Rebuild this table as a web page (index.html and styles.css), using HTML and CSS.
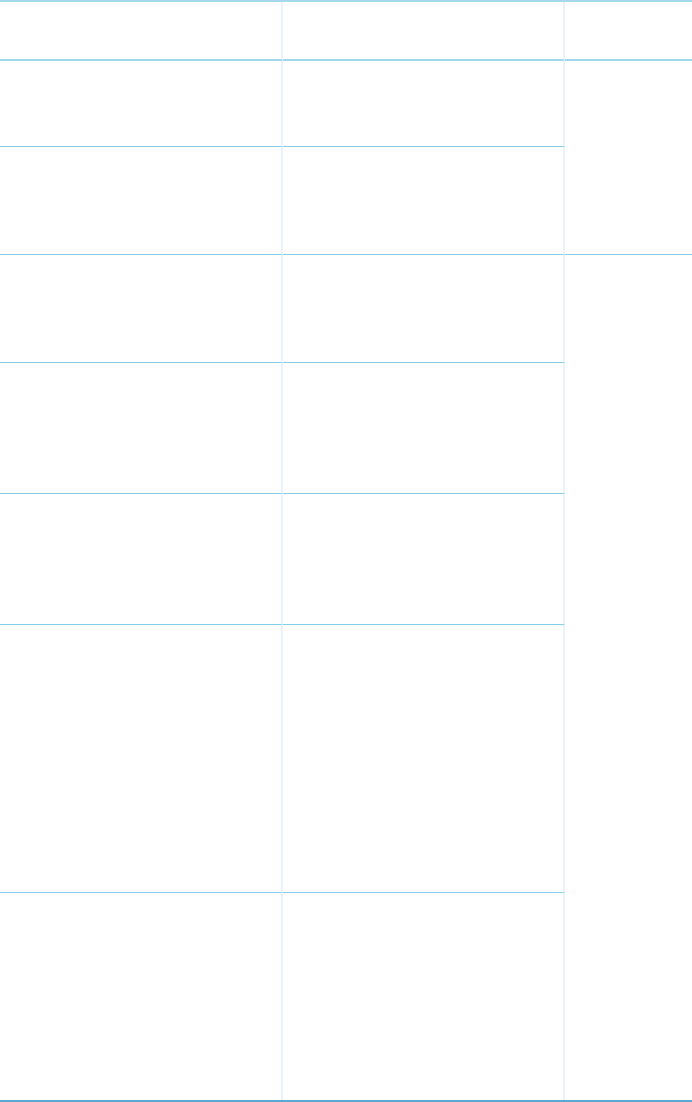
FILE: index.html
```html
<!DOCTYPE html>
<html>
<head>
<meta name="viewport" content="width=device-width, initial-scale=1">
<link rel="stylesheet" href="styles.css">
</head>
<body>

<div class="grid">
  <div class="cell head"></div>
  <div class="cell head"></div>
  <div class="cell head last"></div>

  <div class="cell r1"></div>
  <div class="cell r1"></div>
  <div class="cell last spanA"></div>

  <div class="cell r2"></div>
  <div class="cell r2"></div>

  <div class="cell r3"></div>
  <div class="cell r3"></div>
  <div class="cell last spanB"></div>

  <div class="cell r4"></div>
  <div class="cell r4"></div>

  <div class="cell r5"></div>
  <div class="cell r5"></div>

  <div class="cell r6"></div>
  <div class="cell r6"></div>

  <div class="cell r7 end"></div>
  <div class="cell r7 end"></div>
</div>

</body>
</html>
```

FILE: styles.css
```css
body {
  margin: 0;
  background: #fff;
  font-family: "Liberation Sans", Arial, sans-serif;
}

* {
  box-sizing: border-box;
}

/* The table grid */
.grid {
  display: grid;
  width: 692px;
  grid-template-columns: 283px 282px 127px;
  grid-template-rows: 59px 86px 108px 108px 131px 131px 268px 207px;
  border-top: 2px solid #a6d8ec;
  border-bottom: 2px solid #5aa9d3;
}

.cell {
  border-right: 2px solid #e6f3fa;
  border-bottom: 1px solid #86cde8;
}

.cell.last {
  border-right: none;
}

.cell.head {
  border-bottom: 2px solid #9fd6ec;
}

.cell.end {
  border-bottom: none;
}

.spanA {
  grid-column: 3;
  grid-row: 2 / 4;
}

.spanB {
  grid-column: 3;
  grid-row: 4 / 9;
  border-bottom: none;
}
```
